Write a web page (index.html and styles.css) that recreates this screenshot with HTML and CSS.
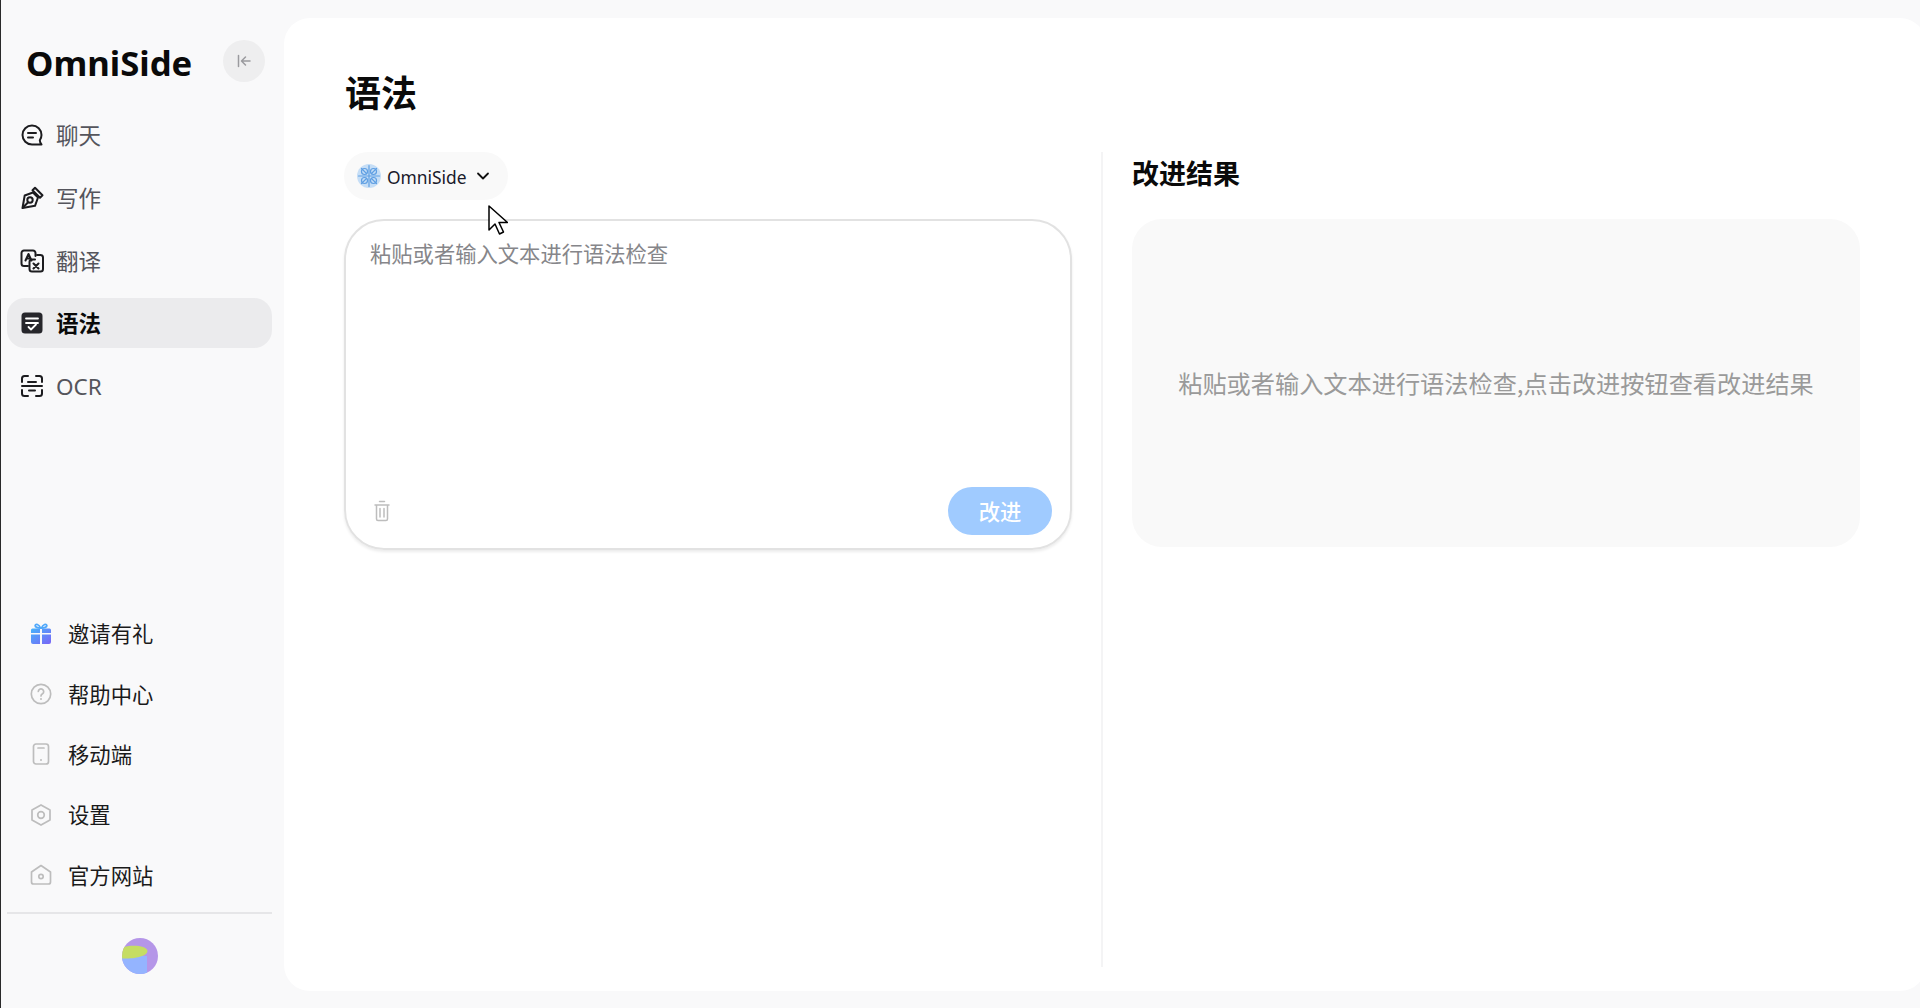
FILE: index.html
```html
<!DOCTYPE html>
<html lang="zh-CN">
<head>
<meta charset="utf-8">
<title>OmniSide</title>
<link rel="stylesheet" href="styles.css">
</head>
<body>
<div class="app">
  <aside class="sidebar">
    <div class="brand">
      <span class="logo">OmniSide</span>
      <button class="collapse" aria-label="收起">
        <svg viewBox="0 0 16 16" width="16" height="16" fill="none" stroke="#9a9a9e" stroke-width="1.5" stroke-linecap="round" stroke-linejoin="round"><path d="M2.500 2.500v11M14 8H6M9.500 4 5.500 8l4 4"/></svg>
      </button>
    </div>
    <nav class="nav">
      <a class="nav-item">
        <svg class="nav-icon" viewBox="0 0 24 24" fill="none" stroke="#1c1c1f" stroke-width="2" stroke-linecap="round" stroke-linejoin="round"><path d="M12 2.500a9.500 9.500 0 1 0 0 19h9.500c-1-1-1.600-2.200-1.700-4.200A9.400 9.400 0 0 0 21.500 12 9.500 9.500 0 0 0 12 2.500Z"/><path d="M8 10h8M8 14.500h5"/></svg>
        <span>聊天</span>
      </a>
      <a class="nav-item">
        <svg class="nav-icon" viewBox="0 0 24 24" fill="none" stroke="#1c1c1f" stroke-width="2" stroke-linejoin="round"><path d="M2.500 22 4.700 9.500 13 6.500l5 5-3 8.300L2.500 22Z"/><path d="M15 1.800l7.500 7.500-2.500 2.500-7.500-7.500L15 1.800Z"/><circle cx="10" cy="14" r="2.700"/><path d="m2.800 21.700 5.300-5.500"/></svg>
        <span>写作</span>
      </a>
      <a class="nav-item">
        <svg class="nav-icon" viewBox="0 0 24 24" fill="none" stroke="#1c1c1f" stroke-width="2" stroke-linecap="round" stroke-linejoin="round"><path d="M8 17H4a2.500 2.500 0 0 1-2.500-2.500V4A2.500 2.500 0 0 1 4 1.500h9A2.500 2.500 0 0 1 15.500 4v3"/><path d="M17 6h3.500A2.500 2.500 0 0 1 23 8.500V20a2.500 2.500 0 0 1-2.500 2.500H12A2.500 2.500 0 0 1 9.500 20v-7A2.500 2.500 0 0 1 12 10.500h3"/><path d="m5.500 11.500 3-6.500 3 6.500M6.500 9.500h4M13.500 14.500l5 5M18.500 14.500l-5 5"/></svg>
        <span>翻译</span>
      </a>
      <a class="nav-item is-active">
        <svg class="nav-icon" viewBox="0 0 24 24"><rect x="1.500" y="1.500" width="21" height="21" rx="3.500" fill="#26262b"/><path d="M6 7.500h12M6 12h12M8.500 16l2.500 2.500 5-5" fill="none" stroke="#fff" stroke-width="1.800" stroke-linecap="round" stroke-linejoin="round"/></svg>
        <span>语法</span>
      </a>
      <a class="nav-item">
        <svg class="nav-icon" viewBox="0 0 24 24" fill="none" stroke="#1c1c1f" stroke-width="2" stroke-linecap="round" stroke-linejoin="round"><path d="M8 2H4.500A2.500 2.500 0 0 0 2 4.500V8M16 2h3.500A2.500 2.500 0 0 1 22 4.500V8M8 22H4.500A2.500 2.500 0 0 1 2 19.500V16M16 22h3.500a2.500 2.500 0 0 0 2.500-2.500V16M2 12h20M8 8h8M9 16.500h6"/></svg>
        <span class="latin">OCR</span>
      </a>
    </nav>
    <div class="links">
      <a class="link-item">
        <svg class="link-icon" viewBox="0 0 22 22">
          <defs><linearGradient id="gift" x1="0" y1="0" x2="1" y2="1"><stop offset="0" stop-color="#47b4fb"/><stop offset="1" stop-color="#7a64f6"/></linearGradient></defs>
          <path fill="url(#gift)" d="M1 7A1.500 1.500 0 0 1 2.500 5.500H10V10H1V7ZM12 5.500h7.500A1.500 1.500 0 0 1 21 7v3h-9V5.500ZM1 11.500h9V21H3a2 2 0 0 1-2-2v-7.500ZM12 11.500h9V19a2 2 0 0 1-2 2h-7v-9.500Z"/>
          <path fill="none" stroke="#4fa8fb" stroke-width="1.800" d="M10.500 5C9 1 5.500.5 5.200 2.500 5 4.200 8 5 10.500 5ZM11.500 5c1.500-4 5-4.500 5.300-2.500C17 4.200 14 5 11.500 5Z"/>
        </svg>
        <span>邀请有礼</span>
      </a>
      <a class="link-item">
        <svg class="link-icon" viewBox="0 0 22 22" fill="none" stroke="#bdbdbd" stroke-width="1.700" stroke-linecap="round"><circle cx="11" cy="11" r="9.700"/><path d="M8.300 8.500a2.700 2.700 0 1 1 4.200 2.300c-1 .6-1.500 1-1.500 2.200"/><path d="M11 16v.1" stroke-width="2"/></svg>
        <span>帮助中心</span>
      </a>
      <a class="link-item">
        <svg class="link-icon" viewBox="0 0 22 22" fill="none" stroke="#bdbdbd" stroke-width="1.700" stroke-linecap="round"><rect x="3.500" y="1" width="15" height="20" rx="2.500"/><path d="M8 5h6"/><path d="M11 17v.1" stroke-width="2"/></svg>
        <span>移动端</span>
      </a>
      <a class="link-item">
        <svg class="link-icon" viewBox="0 0 22 22" fill="none" stroke="#bdbdbd" stroke-width="1.700" stroke-linejoin="round"><path d="m11 .9 9 5.100v10l-9 5.100L2 16V6l9-5.100Z"/><circle cx="11" cy="11" r="3.300"/></svg>
        <span>设置</span>
      </a>
      <a class="link-item">
        <svg class="link-icon" viewBox="0 0 22 22" fill="none" stroke="#bdbdbd" stroke-width="1.700" stroke-linejoin="round"><path d="M1.500 8 11 1.500 20.500 8v10a2 2 0 0 1-2 2h-15a2 2 0 0 1-2-2V8Z"/><circle cx="11" cy="12.500" r="2.200"/></svg>
        <span>官方网站</span>
      </a>
    </div>
    <div class="profile">
      <svg class="avatar" viewBox="0 0 36 36">
        <defs><clipPath id="round"><circle cx="18" cy="18" r="18"/></clipPath></defs>
        <g clip-path="url(#round)">
          <rect width="36" height="36" fill="#b596e8"/>
          <path d="M0 18h25v18H0Z" fill="#94b4ff"/>
          <path d="M0 9.500C8 6.500 25 7 25.500 13 25 19 10 21 0 20.500Z" fill="#c5dd63"/>
        </g>
      </svg>
    </div>
  </aside>
  <main class="main">
    <h1 class="title">语法</h1>
    <div class="columns">
      <section class="editor">
        <button class="model">
          <svg class="model-logo" viewBox="0 0 24 24">
            <circle cx="12" cy="12" r="12" fill="#c6def6"/>
            <g fill="none" stroke="#5f9fe3" stroke-width="1.200" stroke-linecap="round">
              <path d="M12 1.500v21M1.500 12h21M4.500 4.500l5 5M19.500 4.500l-5 5M4.500 19.500l5-5M19.500 19.500l-5-5"/>
              <circle cx="7.500" cy="7.500" r="3"/><circle cx="16.500" cy="7.500" r="3"/><circle cx="7.500" cy="16.500" r="3"/><circle cx="16.500" cy="16.500" r="3"/>
            </g>
          </svg>
          <span class="model-name">OmniSide</span>
          <svg class="chevron" viewBox="0 0 14 14" fill="none" stroke="#111" stroke-width="1.800" stroke-linecap="round" stroke-linejoin="round"><path d="m2 4.500 5 5 5-5"/></svg>
        </button>
        <div class="input-box">
          <div class="placeholder">粘贴或者输入文本进行语法检查</div>
          <div class="input-foot">
            <svg class="trash" viewBox="0 0 16 22" fill="none" stroke="#bdbdbd" stroke-width="1.500" stroke-linecap="round"><path d="M1 5h14M5.500 1.500h5M2.500 5v14a1.500 1.500 0 0 0 1.500 1.500h8a1.500 1.500 0 0 0 1.500-1.500V5M6 8.500v8.500M10 8.500v8.500"/></svg>
            <button class="submit">改进</button>
          </div>
        </div>
      </section>
      <section class="result">
        <h2 class="result-title">改进结果</h2>
        <div class="result-box">粘贴或者输入文本进行语法检查,点击改进按钮查看改进结果</div>
      </section>
    </div>
  </main>
</div>
<svg class="cursor" viewBox="0 0 20 30"><path d="M1 1v24l6-6 4.500 10 4-2L11 17.500h8.500L1 1Z" fill="#fff" stroke="#000" stroke-width="1.500" stroke-linejoin="round"/></svg>
</body>
</html>
```
FILE: styles.css
```css
* { box-sizing: border-box; }
html, body { height: 100%; margin: 0; overflow: hidden; }
body {
  background: #f9f9fa;
  font-family: "Noto Sans CJK SC", "Noto Sans", sans-serif;
  color: #111;
  position: relative;
}
button { font: inherit; border: 0; padding: 0; }
h1, h2 { margin: 0; }
.latin, .logo, .model-name { font-family: "Noto Sans", sans-serif; }

.app { display: flex; height: 1008px; border-left: 1px solid #2a2a2a; }

.sidebar { width: 283px; flex: none; display: flex; flex-direction: column; padding: 0 12px 0 6px; }
.brand { display: flex; align-items: center; justify-content: space-between; height: 84px; padding: 36px 7px 0 19px; }
.logo { font-size: 34.700px; font-weight: 700; color: #0a0a0a; line-height: 48px; margin-top: 5px; }
.collapse { width: 42px; height: 42px; border-radius: 50%; background: #eeeeef; display: flex; align-items: center; justify-content: center; margin-top: 2px; }

.nav { display: flex; flex-direction: column; gap: 12.800px; margin-top: 26px; }
.nav-item { display: flex; align-items: center; height: 50px; padding-left: 14px; gap: 12px; border-radius: 18px; font-size: 22.500px; color: #55555c; }
.nav-item span { padding-bottom: 2px; }
.nav-item .latin { padding-bottom: 0; }
.nav-icon { width: 24px; height: 24px; flex: none; margin-left: -1px; }
.nav-item.is-active { background: #ebebed; color: #0a0a0a; font-weight: 700; }

.links { margin-top: auto; display: flex; flex-direction: column; gap: 20.300px; padding-left: 23px; }
.link-item { display: flex; align-items: center; height: 40px; gap: 16px; font-size: 21.330px; color: #1a1a1a; }
.link-item span { padding-bottom: 2px; }
.link-icon { width: 22px; height: 22px; flex: none; }

.profile { margin-top: 17px; height: 96px; border-top: 2px solid #e6e6e8; display: flex; justify-content: center; padding-top: 24px; }
.avatar { width: 36px; height: 36px; }

.main { flex: 1; margin: 18px -6px 17px 0; background: #fff; border-radius: 26px; padding: 46px 66px 24px 61px; display: flex; flex-direction: column; min-width: 0; }
.title { font-size: 36px; font-weight: 700; line-height: 54px; color: #0a0a0a; }
.columns { flex: 1; display: flex; margin-top: 34px; }

.editor { width: 758px; flex: none; padding-right: 30px; border-right: 2px solid #f4f4f5; display: flex; flex-direction: column; }
.model { align-self: flex-start; height: 48px; width: 164px; margin-left: -1px; border-radius: 24px; background: #f9f9f9; display: flex; align-items: center; padding-left: 13px; gap: 6px; color: #1a1a2a; font-size: 17.400px; }
.model-logo { width: 24px; height: 24px; flex: none; }
.model-name { padding-top: 2px; }
.chevron { width: 14px; height: 14px; margin-left: 3px; }
.input-box { margin-top: 19px; margin-left: -1px; height: 331px; width: 728px; border: 2px solid #e2e2e2; border-radius: 40px; box-shadow: 0 2px 3px rgba(0,0,0,.08); padding: 16px 18px 13px 24px; display: flex; flex-direction: column; justify-content: space-between; }
.placeholder { font-size: 21.300px; line-height: 32px; color: #86868a; }
.input-foot { display: flex; align-items: center; justify-content: space-between; }
.trash { width: 16px; height: 22px; margin-left: 4px; }
.submit { width: 104px; height: 48px; border-radius: 24px; background: #a0cbff; color: #fff; font-size: 21.330px; font-weight: 500; padding-bottom: 2px; }

.result { flex: 1; padding-left: 29px; min-width: 0; }
.result-title { font-size: 27px; font-weight: 700; line-height: 42px; color: #0a0a0a; }
.result-box { margin-top: 25px; height: 328px; border-radius: 30px; background: #f9f9f9; display: flex; align-items: center; justify-content: center; font-size: 24.200px; color: #9a9a9a; padding-bottom: 2px; }

.cursor { position: absolute; left: 488px; top: 205px; width: 20px; height: 30px; }
```
